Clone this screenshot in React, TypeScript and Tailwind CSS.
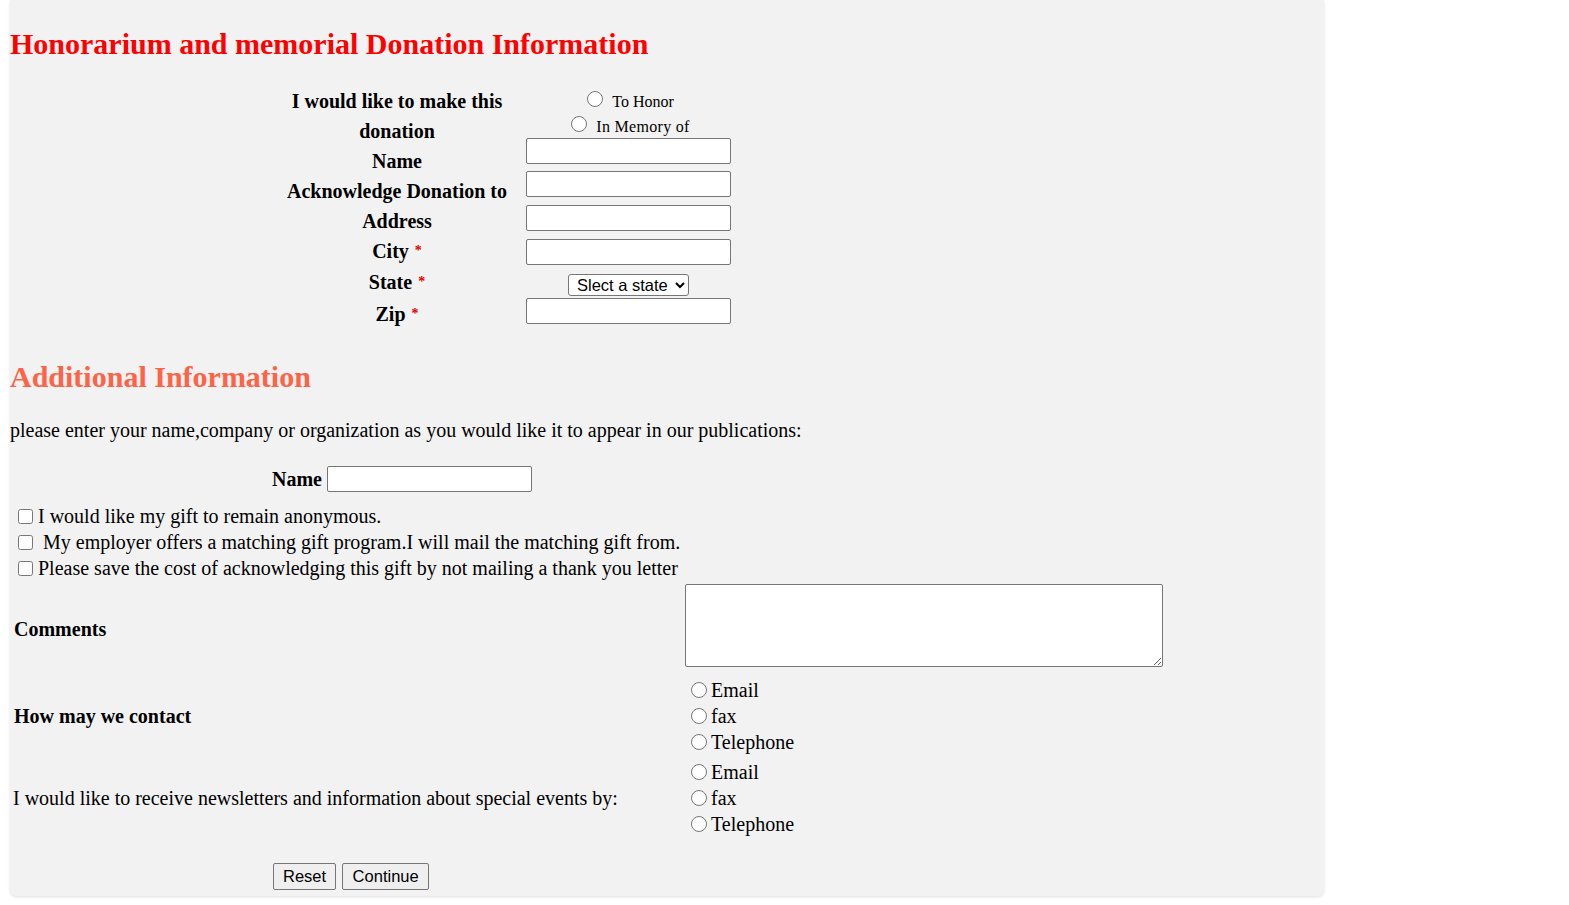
import React from 'react'

const serif = "font-['Liberation_Serif','Times_New_Roman',serif]"
const sans = "font-['Liberation_Sans',Arial,sans-serif]"

function Req() {
	return <span className="ml-[6px] text-[14px] align-top text-[#e00000]">*</span>
}

function Radio({ name }: { name: string }) {
	return (
		<input
			type="radio"
			name={name}
			className="m-0 h-[16px] w-[16px] shrink-0 accent-gray-600"
		/>
	)
}

function RadioLine({ name, label }: { name: string; label: string }) {
	return (
		<label className="flex h-[26px] items-center">
			<span className="ml-[6px] flex">
				<Radio name={name} />
			</span>
			<span className="ml-[4px]">{label}</span>
		</label>
	)
}

const field =
	'h-[26px] w-[205px] rounded-[2px] border border-[#767676] bg-white px-1 text-[16px]'

export default function App() {
	return (
		<div className={`${serif} min-h-[905px] bg-white text-black`}>
			<div className="ml-[10px] flex h-[896px] w-[1314px] flex-col rounded-b-[6px] bg-[#f2f2f2] shadow-[0_1px_3px_rgba(0,0,0,0.12)]">
				<h1 className="mt-[26px] text-[30px] leading-[36px] font-bold text-[#ff0000]">
					Honorarium and memorial Donation Information
				</h1>

				{/* donation details */}
				<div className="mt-[24px] flex">
					<div className="ml-[271px] w-[232px] text-center text-[20px] leading-[30px] font-bold">
						<div>I would like to make this donation</div>
						<div>Name</div>
						<div>Acknowledge Donation to</div>
						<div>Address</div>
						<div>
							City
							<Req />
						</div>
						<div className="leading-[32px]">
							State
							<Req />
						</div>
						<div className="leading-[32px]">
							Zip
							<Req />
						</div>
					</div>
					<div className="ml-[13px] flex w-[205px] flex-col items-center text-[16px]">
						<label className="flex h-[25px] items-center pl-[4px]">
							<Radio name="type" />
							<span className="ml-[9px] mt-[7px]">To Honor</span>
						</label>
						<label className="flex h-[26px] items-center pl-[4px]">
							<Radio name="type" />
							<span className="ml-[9px] mt-[6px] tracking-[0.3px]">In Memory of</span>
						</label>
						<input className={`${field} mt-[1px]`} />
						<input className={`${field} mt-[7px]`} />
						<input className={`${field} mt-[8px]`} />
						<input className={`${field} mt-[8px]`} />
						<select
							className={`${sans} mt-[9px] h-[22px] w-[121px] rounded-[3px] border border-[#767676] bg-white pl-[4px] text-[16.5px] leading-[20px]`}
						>
							<option>Slect a state</option>
						</select>
						<input className={`${field} mt-[2px]`} />
					</div>
				</div>

				<h2 className="mt-[29px] text-[30px] leading-[36px] font-bold text-[#ff6347]">
					Additional Information
				</h2>
				<p className="mt-[22px] text-[20px] leading-[26px]">
					please enter your name,company or organization as you would like it
					to appear in our publications:
				</p>

				<div className="mt-[21px] flex items-center">
					<span className="ml-[262px] text-[20px] font-bold">Name</span>
					<input className={`${field} ml-[5px]`} />
				</div>

				<div className="mt-[9px] flex flex-col pl-[8px] text-[20px] leading-[26px]">
					<label className="flex items-center">
						<input type="checkbox" className="m-0 h-[15px] w-[15px]" />
						<span className="ml-[5px]">I would like my gift to remain anonymous.</span>
					</label>
					<label className="flex items-center">
						<input type="checkbox" className="m-0 h-[15px] w-[15px]" />
						<span className="ml-[10px]">
							My employer offers a matching gift program.I will mail the matching
							gift from.
						</span>
					</label>
					<label className="flex items-center">
						<input type="checkbox" className="m-0 h-[15px] w-[15px]" />
						<span className="ml-[5px]">
							Please save the cost of acknowledging this gift by not mailing a
							thank you letter
						</span>
					</label>
				</div>

				<div className="mt-[3px] grid grid-cols-[675px_1fr] items-center text-[20px]">
					<div className="pt-[7px] pl-[4px] font-bold">Comments</div>
					<div className="flex h-[83px] items-start">
						<textarea className="h-[83px] w-[478px] resize-y rounded-[2px] border border-[#767676] bg-white" />
					</div>

					<div className="mt-[10px] pl-[4px] font-bold">How may we contact</div>
					<div className="mt-[10px] flex flex-col">
						<RadioLine name="contact" label="Email" />
						<RadioLine name="contact" label="fax" />
						<RadioLine name="contact" label="Telephone" />
					</div>

					<div className="mt-[4px] pl-[3px]">
						I would like to receive newsletters and information about special
						events by:
					</div>
					<div className="mt-[4px] flex flex-col">
						<RadioLine name="news" label="Email" />
						<RadioLine name="news" label="fax" />
						<RadioLine name="news" label="Telephone" />
					</div>
				</div>

				<div className={`${sans} mt-[26px] ml-[263px] flex gap-[6px] text-[16.5px]`}>
					<button className="h-[27px] rounded-[2px] border border-[#767676] bg-[#efefef] px-[9px]">
						Reset
					</button>
					<button className="h-[27px] rounded-[2px] border border-[#767676] bg-[#efefef] px-[9.5px]">
						Continue
					</button>
				</div>
			</div>
		</div>
	)
}
